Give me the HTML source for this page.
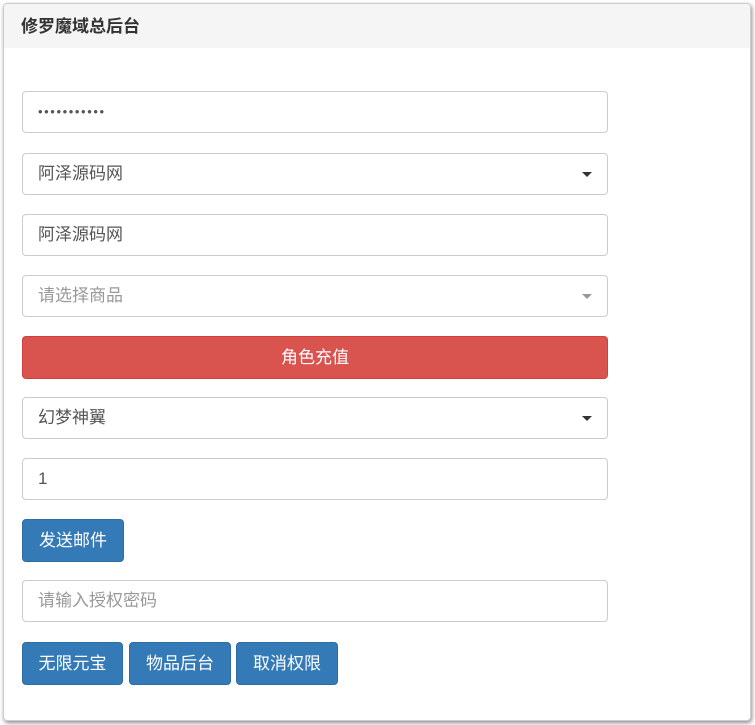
<!DOCTYPE html>
<html><head><meta charset="utf-8"><style>
body{margin:0;background:#fff;font-family:"Liberation Sans","Noto Sans CJK SC",sans-serif;width:755px;height:725px;overflow:hidden}
.panel{position:absolute;left:3px;top:3px;width:748px;height:718px;border:1px solid #ccc;border-radius:4px;box-shadow:1px 2px 4px rgba(0,0,0,.45);background:#fff;box-sizing:border-box;overflow:hidden}
.hd{height:44px;background:#f5f5f5;font-weight:bold;font-size:17px;color:#333;line-height:46px;padding-left:17px}
.f{position:absolute;left:22px;width:586px;height:42px;border:1px solid #ccc;border-radius:4px;box-sizing:border-box;font-size:17px;color:#555;line-height:40px;padding-left:15px;background:#fff}
.ph{color:#999}
.car{position:absolute;right:15px;top:18px;width:0;height:0;border-left:5px solid transparent;border-right:5px solid transparent;border-top:5px solid #333}
.b{position:absolute;height:43px;border-radius:4px;background:#337ab7;border:1px solid #2e6da4;box-sizing:border-box;color:#fff;font-size:17px;line-height:41px;text-align:center}
</style></head><body>
<div class="panel"><div class="hd">修罗魔域总后台</div></div>
<div class="f" style="top:91px;font-size:13px;letter-spacing:1.6px">•••••••••••</div>
<div class="f" style="top:153px">阿泽源码网<span class="car"></span></div>
<div class="f" style="top:214px">阿泽源码网</div>
<div class="f ph" style="top:275px">请选择商品<span class="car" style="border-top-color:#999"></span></div>
<div class="b" style="top:336px;left:22px;width:586px;background:#d9534f;border-color:#d43f3a">角色充值</div>
<div class="f" style="top:397px">幻梦神翼<span class="car"></span></div>
<div class="f" style="top:458px">1</div>
<div class="b" style="top:519px;left:22px;width:102px">发送邮件</div>
<div class="f ph" style="top:580px">请输入授权密码</div>
<div class="b" style="top:642px;left:22px;width:101px">无限元宝</div>
<div class="b" style="top:642px;left:129px;width:102px">物品后台</div>
<div class="b" style="top:642px;left:236px;width:102px">取消权限</div>
</body></html>
